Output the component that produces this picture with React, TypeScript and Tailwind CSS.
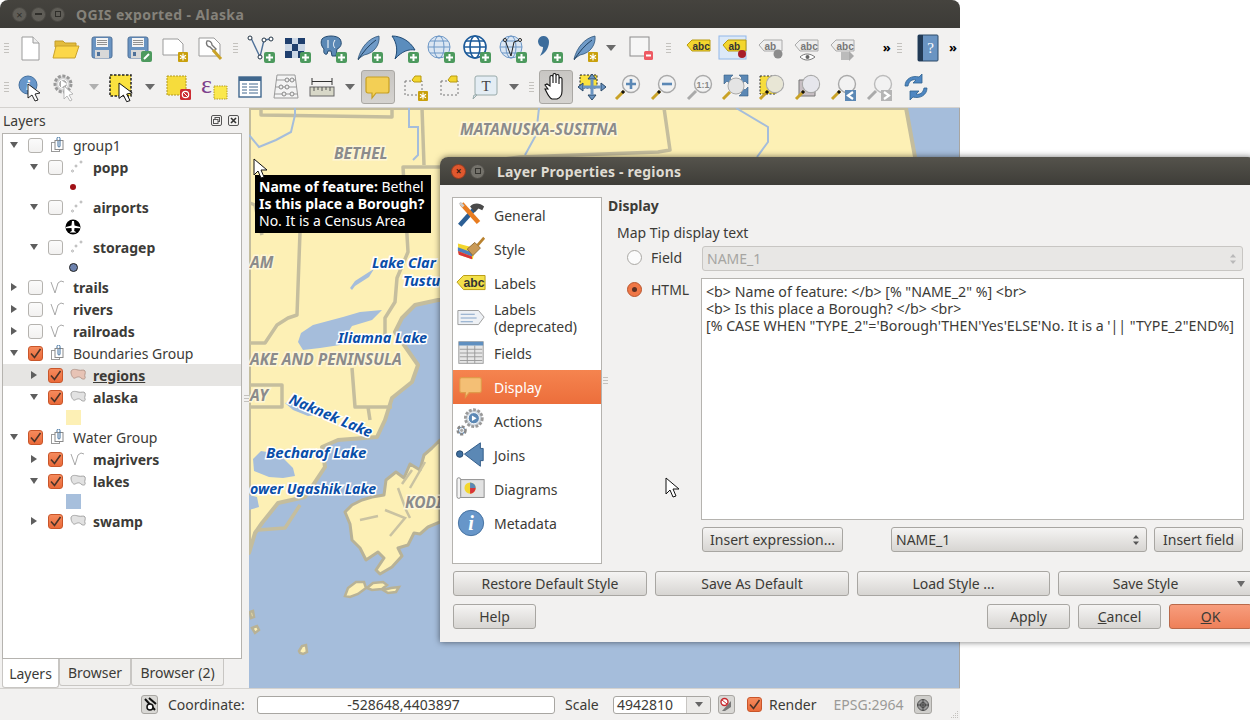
import React from "react";

const S: React.FC<{ size?: number; children: React.ReactNode }> = ({ size = 32, children }) => (
  <svg width={size} height={size} viewBox="0 0 32 32" className="block shrink-0">
    {children}
  </svg>
);

const PlusBadge = () => (
  <g>
    <rect x="20" y="20" width="11" height="11" rx="2" fill="#4d9a5e" />
    <path d="M25.5 22v7M22 25.5h7" stroke="#fff" strokeWidth="2" />
  </g>
);

const StarBadge = () => (
  <g>
    <rect x="20" y="20" width="10" height="10" rx="1" fill="#c9a00c" />
    <path d="M25 21.5v7M22 23.2l6 3.6M28 23.2l-6 3.6" stroke="#fff" strokeWidth="1.2" />
  </g>
);

const Page = ({ x = 8, w = 17 }: { x?: number; w?: number }) => (
  <g>
    <path d={`M${x} 5h${w - 6}l6 6v${w === 17 ? 17 : 11}H${x}z`} fill="#fff" stroke="#9b9b9b" />
    <path d={`M${x + w - 6} 5v6h6`} fill="#eee" stroke="#9b9b9b" />
  </g>
);

const Floppy = () => (
  <g>
    <rect x="6" y="5" width="20" height="21" rx="2" fill="#6a94c2" stroke="#4f7199" />
    <rect x="10" y="6" width="12" height="9" fill="#f4f4f4" />
    <path d="M11 8.5h10M11 10.5h10M11 12.5h10" stroke="#777" strokeWidth=".8" />
    <rect x="9" y="18" width="14" height="8" fill="#d8d8d8" />
    <rect x="11" y="20" width="3" height="4" fill="#4f7199" />
  </g>
);

const Globe = ({ dark }: { dark?: boolean }) => (
  <g fill="none" stroke={dark ? "#1d5b9a" : "#6d97c6"} strokeWidth={dark ? 1.6 : 1}>
    <circle cx="15" cy="15" r="11" fill={dark ? "#fff" : "#dbe6f2"} />
    <ellipse cx="15" cy="15" rx="5" ry="11" />
    <path d="M4 15h22M6 9h18M6 21h18" />
  </g>
);

const Feather = ({ fill = "#6f9ac7" }: { fill?: string }) => (
  <g>
    <path d="M6 27C9 15 17 6 27 4c1 8-4 17-15 19z" fill={fill} stroke="#2f5478" strokeWidth=".8" />
    <path d="M6 28C11 20 17 13 24 8" stroke="#20405f" fill="none" />
  </g>
);

const Tag = ({ text = "abc", fill = "#f3d62e", stroke = "#b89a10", color = "#333" }) => (
  <g>
    <path d="M5 13l5-5h18v11H10z" fill={fill} stroke={stroke} />
    <text x="10.5" y="17.5" fontSize="10" fontWeight="700" fill={color} fontFamily="'Liberation Sans',sans-serif">
      {text}
    </text>
  </g>
);

const Magnifier = ({ children }: { children?: React.ReactNode }) => (
  <g>
    <path d="M12 20L4 28" stroke="#c9a227" strokeWidth="3" />
    <path d="M12 20l-2 2" stroke="#111" strokeWidth="3" />
    <circle cx="19" cy="13" r="8.5" fill="#f2f2f2" stroke="#a9a9a9" strokeWidth="1.4" />
    {children}
  </g>
);

const Bubble = ({ fill = "#f3cf55", stroke = "#c7a022" }) => (
  <path d="M6 6h19a2 2 0 0 1 2 2v12a2 2 0 0 1-2 2H14l-4 5v-5H6a2 2 0 0 1-2-2V8a2 2 0 0 1 2-2z" fill={fill} stroke={stroke} strokeWidth="1.2" />
);

const Arrow = ({ x = 11, y = 13, s = 1 }: { x?: number; y?: number; s?: number }) => (
  <path
    transform={`translate(${x} ${y}) scale(${s})`}
    d="M0 0l0 14 4-3 3 6 3-1-3-6 5-1z"
    fill="#fff"
    stroke="#111"
    strokeWidth=".9"
  />
);

const InfoDisc = ({ r = 12 }: { r?: number }) => (
  <g>
    <circle cx="14" cy="14" r={r} fill="#6796c9" stroke="#44709f" />
    <text x="14" y={14 + r * 0.55} textAnchor="middle" fontSize={r * 1.6} fontWeight="700" fontStyle="italic" fill="#fff" fontFamily="'Liberation Serif',serif">
      i
    </text>
  </g>
);

const Gear = ({ cx = 14, cy = 14, r = 9, fill = "#d8d8d8", stroke = "#999" }) => (
  <g>
    <circle cx={cx} cy={cy} r={r} fill={fill} stroke={stroke} strokeWidth="3" strokeDasharray="3 1.6" />
    <circle cx={cx} cy={cy} r={r * 0.55} fill="#aaa" stroke="#fff" />
  </g>
);

const NewDoc = () => <S><Page /></S>;
const Open = () => (
  <S>
    <path d="M5 9h8l2 2h11v4H5z" fill="#e3bc3c" stroke="#c49c28" />
    <path d="M6 14h23l-4 12H3z" fill="#fcd749" stroke="#c9a22c" />
  </S>
);
const Save = () => <S><Floppy /></S>;
const SaveAs = () => (
  <S>
    <Floppy />
    <rect x="19" y="19" width="11" height="11" rx="2" fill="#4d9a5e" />
    <path d="M22 27l5-5" stroke="#fff" strokeWidth="2" />
  </S>
);
const NewComposer = () => (
  <S>
    <path d="M5 7h15l5 5v11H5z" fill="#fff" stroke="#9b9b9b" />
    <StarBadge />
  </S>
);
const ComposerMgr = () => (
  <S>
    <path d="M5 6h15l6 6v12H5z" fill="#fff" stroke="#9b9b9b" />
    <path d="M13 9a4 4 0 0 0 3 6l4 4 2-2-4-4a4 4 0 0 0-5-4z" fill="none" stroke="#777" strokeWidth="1.4" />
    <path d="M19 18l8 9" stroke="#c9a227" strokeWidth="3" />
  </S>
);
const AddVector = () => (
  <S>
    <path d="M7 6l9 19 4-17 7-1" fill="none" stroke="#4f7199" strokeWidth="1.4" />
    <circle cx="6" cy="6" r="2" fill="#fff" stroke="#234" />
    <circle cx="20" cy="8" r="2" fill="#fff" stroke="#234" />
    <circle cx="27" cy="7" r="2" fill="#fff" stroke="#234" />
    <circle cx="16" cy="25" r="2" fill="#fff" stroke="#234" />
    <PlusBadge />
  </S>
);
const AddRaster = () => (
  <S>
    <rect x="5" y="6" width="20" height="20" fill="#cbd7e6" />
    <path d="M5 6h7v6H5zM18 6h7v6h-7zM12 12h6v7h-6zM5 19h7v7H5zM18 19h6v7h-6z" fill="#1f3f6e" />
    <PlusBadge />
  </S>
);
const AddPg = () => (
  <S>
    <path d="M6 7c3-4 15-4 18 0 3 5 0 9-3 10l-1 7h-4l-1-5h-3l-1 3c-2 1-4-1-3-5-2-2-4-6-2-10z" fill="#5b88b5" stroke="#244a70" />
    <path d="M12 8v8M19 8c-2 3-2 6 0 8" stroke="#fff" fill="none" />
    <PlusBadge />
  </S>
);
const AddFeather = () => <S><Feather /><PlusBadge /></S>;
const AddWcs = () => (
  <S>
    <path d="M4 4c9 0 18 5 23 14-6-1-13 1-20 9 3-8 2-16-3-23z" fill="#5b8dbd" stroke="#1f4a75" />
    <PlusBadge />
  </S>
);
const AddWms = () => <S><Globe /><PlusBadge /></S>;
const AddWfs = () => <S><Globe dark /><PlusBadge /></S>;
const AddV = () => (
  <S>
    <Globe />
    <path d="M9 8l6 16 3-14 6-2" fill="none" stroke="#222" />
    <circle cx="9" cy="8" r="1.5" fill="#fff" stroke="#222" />
    <circle cx="24" cy="8" r="1.5" fill="#fff" stroke="#222" />
    <PlusBadge />
  </S>
);
const AddComma = () => (
  <S>
    <path d="M6 9a5.5 5.5 0 1 1 11 1c0 7-5 12-9 14 2-4 3-6 3-9-3 0-5-3-5-6z" fill="#3d6d9c" />
    <PlusBadge />
  </S>
);
const NewFeather = () => <S><Feather /><StarBadge /></S>;
const RemoveLayer = () => (
  <S>
    <rect x="6" y="5" width="19" height="19" fill="#f6f6f6" stroke="#8c8c8c" />
    <rect x="20" y="19" width="9" height="9" rx="1.5" fill="#ee5a63" />
    <path d="M22 23.5h5" stroke="#fff" strokeWidth="2" />
  </S>
);
const LabelAbc = () => <S size={32}><Tag /></S>;
const LabelPin = () => (
  <S>
    <rect x="1" y="4" width="27" height="23" fill="#dce9f8" stroke="#92b8e8" />
    <Tag text="ab" />
    <circle cx="24" cy="22" r="4" fill="#a81e2a" />
  </S>
);
const LabelGrayPin = () => (
  <S>
    <Tag text="ab" fill="#eee" stroke="#aaa" color="#777" />
    <circle cx="24" cy="22" r="4.5" fill="#8c8c8c" />
  </S>
);
const LabelEye = () => (
  <S>
    <Tag fill="#eee" stroke="#aaa" color="#777" />
    <path d="M10 25c4-4 10-4 15 0-5 4-11 4-15 0z" fill="#fff" stroke="#777" />
    <circle cx="17.5" cy="25" r="2" fill="#666" />
  </S>
);
const LabelMove = () => (
  <S>
    <Tag fill="#eee" stroke="#aaa" color="#777" />
    <rect x="15" y="20" width="8" height="8" fill="#bbb" />
    <path d="M23 19l5 5-5 5z" fill="#aaa" />
  </S>
);
const Help = () => (
  <S>
    <rect x="6" y="3" width="20" height="26" rx="1" fill="#6a94c2" stroke="#2c4a69" />
    <rect x="6" y="3" width="5" height="26" fill="#223a55" />
    <text x="18.5" y="21" textAnchor="middle" fontSize="15" fill="#fff" fontFamily="'Liberation Serif',serif">?</text>
  </S>
);
const Identify = () => (
  <S>
    <InfoDisc r={9} />
    <Arrow x={14} y={13} />
  </S>
);
const RunAction = () => (
  <S>
    <Gear cx={13} cy={13} r={8} />
    <path d="M11 9l6 4-6 4z" fill="#fff" />
    <path d="M14 15l0 13 3-3 3 5 2-1-3-5 4-1z" fill="#fff" stroke="#aaa" strokeWidth=".8" />
  </S>
);
const SelectArrow = () => (
  <S>
    <rect x="4" y="4" width="21" height="21" fill="#fbe23f" stroke="#222" strokeWidth="1.5" strokeDasharray="2.5 1.5" />
    <Arrow x={13} y={12} s={1.1} />
  </S>
);
const Deselect = () => (
  <S>
    <rect x="5" y="5" width="19" height="19" fill="#f6dc3c" stroke="#b19a20" strokeDasharray="2 1" />
    <rect x="18" y="18" width="11" height="11" rx="1.5" fill="#cc2c33" />
    <circle cx="23.5" cy="23.5" r="3.2" fill="none" stroke="#fff" strokeWidth="1.2" />
    <path d="M21 21l5 5" stroke="#fff" />
  </S>
);
const Epsilon = () => (
  <S>
    <text x="3" y="22" fontSize="26" fill="#7d3f8c" fontFamily="'Liberation Serif',serif">ε</text>
    <rect x="16" y="15" width="13" height="13" fill="#fbe84d" stroke="#b59d20" strokeDasharray="1.5 1" />
  </S>
);
const AttrTable = () => (
  <S>
    <rect x="5" y="6" width="22" height="20" fill="#fff" stroke="#40678d" strokeWidth="1.4" />
    <rect x="5" y="6" width="22" height="4" fill="#40678d" />
    <path d="M8 13h5M15 13h9M8 16h5M15 16h9M8 19h5M15 19h9M8 22h5M15 22h9" stroke="#40678d" />
  </S>
);
const Abacus = () => (
  <S>
    <path d="M4 27L7 4h18l3 23z" fill="#f4f4f4" stroke="#999" />
    <path d="M6 9h20M6 16h20M5 23h22" stroke="#999" />
    <g fill="#eee" stroke="#888">
      <circle cx="17" cy="9" r="2" /><circle cx="22" cy="9" r="2" /><circle cx="11" cy="16" r="2" /><circle cx="17" cy="16" r="2" /><circle cx="14" cy="23" r="2" /><circle cx="22" cy="23" r="2" />
    </g>
  </S>
);
const Measure = () => (
  <S>
    <path d="M6 7v7M26 7v7M6 10.5h20" stroke="#333" />
    <rect x="4" y="16" width="24" height="9" fill="#d8d8c8" stroke="#666" />
    <path d="M8 16v4M12 16v3M16 16v4M20 16v3M24 16v4" stroke="#555" />
  </S>
);
const TipActive = () => <S><Bubble /></S>;
const PinTip = ({ badge }: { badge?: boolean }) => (
  <S>
    <rect x="7" y="10" width="17" height="14" fill="none" stroke="#777" strokeDasharray="2 2" />
    <path d="M14 9l3-4h6v6h-7z" fill="#f3d62e" stroke="#b89a10" />
    {badge && <StarBadge />}
  </S>
);
const TextTip = () => (
  <S>
    <rect x="5" y="5" width="22" height="19" rx="2" fill="#e4edf4" stroke="#9aa" />
    <path d="M7 24l-4 4 1-4z" fill="#e4edf4" stroke="#9aa" />
    <text x="16" y="20" textAnchor="middle" fontSize="15" fill="#444" fontFamily="'Liberation Serif',serif">T</text>
  </S>
);
const Hand = () => (
  <S>
    <path d="M8 18l-3-4 2-1 3 2V6c0-2 3-2 3 0v6-8c0-2 3-2 3 0v8-7c0-2 3-2 3 0v8-5c0-2 3-2 3 0v12c0 4-2 7-5 8h-5c-3-1-4-4-7-10z" fill="#fff" stroke="#111" strokeWidth="1.1" />
  </S>
);
const PanSelect = () => (
  <S>
    <rect x="4" y="4" width="17" height="13" fill="#fbe23f" stroke="#222" strokeDasharray="2 1.5" />
    <path d="M16 3l4 5h-8zM16 29l4-5h-8zM2 16l5-4v8zM30 16l-5-4v8z" fill="#6a94c2" stroke="#2c4a69" />
    <path d="M16 8v16M7 16h18" stroke="#6a94c2" strokeWidth="3" />
  </S>
);
const ZoomIn = () => (
  <S><Magnifier><path d="M19 8v10M14 13h10" stroke="#5b88b5" strokeWidth="2.6" /></Magnifier></S>
);
const ZoomOut = () => (
  <S><Magnifier><path d="M14 13h10" stroke="#5b88b5" strokeWidth="2.6" /></Magnifier></S>
);
const ZoomOne = () => (
  <S>
    <path d="M12 20L4 28" stroke="#aaa" strokeWidth="3" />
    <circle cx="19" cy="13" r="8.5" fill="#f2f2f2" stroke="#aaa" strokeWidth="1.4" />
    <text x="19" y="17" textAnchor="middle" fontSize="9" fontWeight="700" fill="#888" fontFamily="'Liberation Sans',sans-serif">1:1</text>
  </S>
);
const ZoomFull = () => (
  <S>
    <path d="M4 4h9l-3 3 3 3-3 3-3-3-3 3zM28 4h-9l3 3-3 3 3 3 3-3 3 3zM28 25h-9l3-3-3-3 3-3 3 3 3-3z" fill="#5b88b5" stroke="#345b82" strokeWidth=".6" />
    <circle cx="16" cy="15" r="8" fill="#e4e4e4" stroke="#aaa" />
    <path d="M10 21l-7 7" stroke="#c9a227" strokeWidth="3" />
  </S>
);
const ZoomLayer = () => (
  <S>
    <rect x="4" y="5" width="16" height="18" fill="#f6dc3c" stroke="#333" strokeDasharray="2 1.5" />
    <Magnifier><circle cx="19" cy="13" r="8" fill="#e8e6d5" /></Magnifier>
  </S>
);
const ZoomSel = () => (
  <S>
    <path d="M7 9h16v16H7z" fill="#c8bfc4" stroke="#777" />
    <Magnifier><circle cx="19" cy="13" r="8" fill="#e6e6ec" /></Magnifier>
  </S>
);
const ZoomLast = () => (
  <S>
    <Magnifier />
    <rect x="17" y="19" width="11" height="11" fill="#5b88b5" />
    <path d="M25 21l-5 3.5 5 3.5" fill="none" stroke="#fff" strokeWidth="2.2" />
  </S>
);
const ZoomNext = () => (
  <S>
    <path d="M12 20L4 28" stroke="#aaa" strokeWidth="3" />
    <circle cx="19" cy="13" r="8.5" fill="#f2f2f2" stroke="#bbb" strokeWidth="1.4" />
    <rect x="17" y="19" width="11" height="11" fill="#b5b5b5" />
    <path d="M20 21l5 3.5-5 3.5" fill="none" stroke="#fff" strokeWidth="2.2" />
  </S>
);
const Refresh = () => (
  <S>
    <path d="M5 15C5 8 12 4 19 6l3-3v9h-9l3-3c-4-1-7 1-8 6z" fill="#4f87c2" stroke="#2e628f" strokeWidth=".8" />
    <path d="M27 17c0 7-7 11-14 9l-3 3v-9h9l-3 3c4 1 7-1 8-6z" fill="#4f87c2" stroke="#2e628f" strokeWidth=".8" />
  </S>
);

const Grip = ({ w = 14 }: { w?: number }) => (
  <div className="flex flex-col items-center justify-center gap-[2px] shrink-0" style={{ width: w }}>
    <div className="w-[5px] h-px bg-[#c4c2be]" />
    <div className="w-[5px] h-px bg-[#c4c2be]" />
    <div className="w-[5px] h-px bg-[#c4c2be]" />
    <div className="w-[5px] h-px bg-[#c4c2be]" />
  </div>
);

const Tool: React.FC<{ children: React.ReactNode; active?: boolean }> = ({ children, active }) => (
  <div className="w-[36px] h-[36px] flex items-center justify-center shrink-0">
    {active ? (
      <div className="w-[34px] h-[34px] rounded-[3px] border border-[#aaa8a4] bg-linear-to-b from-[#c8c6c3] to-[#d5d3d0] flex items-center justify-center">
        {children}
      </div>
    ) : (
      children
    )}
  </div>
);

const Drop = ({ muted, w = 20 }: { muted?: boolean; w?: number }) => (
  <div className="flex items-center justify-center shrink-0" style={{ width: w }}>
    <div className={`w-0 h-0 border-x-[5px] border-x-transparent border-t-[6px] ${muted ? "border-t-[#b0b0b0]" : "border-t-[#6a6a6a]"}`} />
  </div>
);

const Chevrons = () => <div className="w-[14px] text-center text-[13px] font-bold text-black leading-none shrink-0">»</div>;

const row1a = [NewDoc, Open, Save, SaveAs, NewComposer, ComposerMgr];
const row1b = [AddVector, AddRaster, AddPg, AddFeather, AddWcs, AddWms, AddWfs, AddV, AddComma, NewFeather];
const row1c = [LabelAbc, LabelPin, LabelGrayPin, LabelEye, LabelMove];
const row2a = [Deselect, Epsilon, AttrTable, Abacus, Measure];
const row2b = [PanSelect, ZoomIn, ZoomOut, ZoomOne, ZoomFull, ZoomLayer, ZoomSel, ZoomLast, ZoomNext, Refresh];

const Toolbars = () => (
  <div className="h-[80px] bg-[#f2f1f0] flex flex-col border-b border-[#d4d2cf]">
    <div className="h-[40px] flex items-center">
      <Grip w={12} />
      {row1a.map((I, i) => <Tool key={i}><I /></Tool>)}
      <Grip />
      {row1b.map((I, i) => <Tool key={i}><I /></Tool>)}
      <Drop muted={false} w={18} />
      <div className="w-[2px]" />
      <Tool><RemoveLayer /></Tool>
      <Grip w={22} />
      {row1c.map((I, i) => <Tool key={i}><I /></Tool>)}
      <div className="w-[24px]" />
      <Chevrons />
      <Grip w={12} />
      <div className="w-[5px]" />
      <Tool><Help /></Tool>
      <Chevrons />
    </div>
    <div className="h-[40px] flex items-center">
      <Grip w={12} />
      <Tool><Identify /></Tool>
      <Tool><RunAction /></Tool>
      <Drop muted />
      <Tool><SelectArrow /></Tool>
      <Drop />
      {row2a.map((I, i) => <Tool key={i}><I /></Tool>)}
      <Drop />
      <Tool active><TipActive /></Tool>
      <Tool><PinTip badge /></Tool>
      <Tool><PinTip /></Tool>
      <Tool><TextTip /></Tool>
      <Drop />
      <Grip />
      <Tool active><Hand /></Tool>
      {row2b.map((I, i) => <Tool key={i}><I /></Tool>)}
    </div>
  </div>
);

const Check = ({ on }: { on?: boolean }) =>
  on ? (
    <div className="w-[15px] h-[15px] rounded-[3px] border border-[#c9562a] bg-linear-to-b from-[#f58a5c] to-[#ea6a39] flex items-center justify-center shrink-0">
      <svg width="13" height="13" viewBox="0 0 13 13"><path d="M2 6.5l3.5 4L11.5 2" fill="none" stroke="#4a3328" strokeWidth="1.6" /></svg>
    </div>
  ) : (
    <div className="w-[15px] h-[15px] rounded-[3px] border border-[#b5b3af] bg-linear-to-b from-[#fbfbfb] to-[#f2f1f0] shrink-0" />
  );

const Twist = ({ open }: { open?: boolean }) => (
  <svg width="8" height="8" viewBox="0 0 8 8" className="shrink-0">
    {open ? <path d="M0 1h8L4 7z" fill="#5e5e5e" /> : <path d="M1 0l6 4-6 4z" fill="#5e5e5e" />}
  </svg>
);

const GroupIcon = () => (
  <svg width="16" height="16" viewBox="0 0 16 16" className="shrink-0">
    <rect x="1.5" y="5.5" width="8" height="9" fill="#fff" stroke="#9a9a9a" />
    <rect x="5" y="3.5" width="8" height="9" fill="#fff" stroke="#8a8a8a" />
    <path d="M7 3V1.5a1.5 1.5 0 0 1 3 0V9a1 1 0 0 1-2 0V4" fill="none" stroke="#3f6f9e" />
  </svg>
);
const PointIcon = () => (
  <svg width="16" height="16" viewBox="0 0 16 16" className="shrink-0">
    <g fill="#fff" stroke="#a0a0a0" strokeWidth=".8"><circle cx="2.5" cy="12" r="1" /><circle cx="6" cy="7" r="1" /><circle cx="11" cy="3" r="1" /></g>
  </svg>
);
const LineIcon = () => (
  <svg width="16" height="16" viewBox="0 0 16 16" className="shrink-0">
    <path d="M1 3l4 11 3-10 3-2 3 1" fill="none" stroke="#a8a8a8" />
  </svg>
);
const PolyIcon = ({ fill = "#e2e2e2", stroke = "#a4a4a4" }) => (
  <svg width="16" height="16" viewBox="0 0 16 16" className="shrink-0">
    <path d="M1 5c0-3 4-3 7-2s6-1 7 1-1 4 0 6-2 3-4 1-4-1-6 0-4-3-4-6z" fill={fill} stroke={stroke} />
  </svg>
);

type Node = {
  level: 0 | 1;
  name: string;
  icon: React.ReactNode;
  open?: boolean;
  on?: boolean;
  bold?: boolean;
  sel?: boolean;
  legend?: React.ReactNode;
};

const Swatch = ({ c }: { c: string }) => <div className="w-[15px] h-[15px]" style={{ background: c }} />;

const nodes: Node[] = [
  { level: 0, name: "group1", icon: <GroupIcon />, open: true },
  { level: 1, name: "popp", icon: <PointIcon />, open: true, bold: true, legend: <div className="w-[6px] h-[6px] rounded-full bg-[#a01016]" /> },
  {
    level: 1, name: "airports", icon: <PointIcon />, open: true, bold: true,
    legend: (
      <svg width="16" height="16" viewBox="0 0 16 16">
        <circle cx="8" cy="8" r="7.5" fill="#000" />
        <path d="M7 2h2l.5 4.5L15 8v1.2L9.5 9l-.3 3 1.8 1v.6H5v-.6l1.8-1-.3-3L1 9.2V8l5.5-1.5z" fill="#fff" />
      </svg>
    ),
  },
  { level: 1, name: "storagep", icon: <PointIcon />, open: true, bold: true, legend: <div className="w-[9px] h-[9px] rounded-full bg-[#6d82ae] border border-[#222]" /> },
  { level: 0, name: "trails", icon: <LineIcon />, bold: true },
  { level: 0, name: "rivers", icon: <LineIcon />, bold: true },
  { level: 0, name: "railroads", icon: <LineIcon />, bold: true },
  { level: 0, name: "Boundaries Group", icon: <GroupIcon />, open: true, on: true },
  { level: 1, name: "regions", icon: <PolyIcon fill="#e7c3b5" stroke="#b79a8e" />, on: true, bold: true, sel: true },
  { level: 1, name: "alaska", icon: <PolyIcon />, open: true, on: true, bold: true, legend: <Swatch c="#fdf0b5" /> },
  { level: 0, name: "Water Group", icon: <GroupIcon />, open: true, on: true },
  { level: 1, name: "majrivers", icon: <LineIcon />, on: true, bold: true },
  { level: 1, name: "lakes", icon: <PolyIcon />, open: true, on: true, bold: true, legend: <Swatch c="#a7bfdc" /> },
  { level: 1, name: "swamp", icon: <PolyIcon />, on: true, bold: true },
];

const Tree = () => (
  <div className="flex-1 ml-[2px] w-[240px] bg-white border border-[#b5b3af]">
    {nodes.map((n) => (
      <React.Fragment key={n.name}>
        <div className={`h-[22px] flex items-center ${n.level === 1 ? "pl-[27px]" : "pl-[7px]"} ${n.sel ? "bg-[#e6e5e3]" : ""}`}>
          <Twist open={n.open} />
          <div className="w-[10px]" />
          <Check on={n.on} />
          <div className="w-[7px]" />
          {n.icon}
          <span className={`ml-[7px] ${n.bold ? "font-bold" : ""} ${n.sel ? "underline" : ""}`}>{n.name}</span>
        </div>
        {n.legend && <div className="h-[18px] w-[16px] ml-[62px] flex items-center justify-center">{n.legend}</div>}
      </React.Fragment>
    ))}
  </div>
);

const Sidebar = () => (
  <div className="w-[243px] flex flex-col shrink-0">
    <div className="h-[25px] flex items-center px-[3px]">
      <span className="text-[14px]">Layers</span>
      <svg width="11" height="11" viewBox="0 0 11 11" className="ml-auto">
        <rect x=".5" y=".5" width="10" height="10" rx="1.5" fill="none" stroke="#555" />
        <rect x="4" y="2.5" width="4.5" height="4" fill="none" stroke="#555" />
        <rect x="2.5" y="4.5" width="4.5" height="4" fill="#f2f1f0" stroke="#555" />
      </svg>
      <svg width="11" height="11" viewBox="0 0 11 11" className="ml-[6px] mr-[1px]">
        <rect x=".5" y=".5" width="10" height="10" rx="1.5" fill="none" stroke="#555" />
        <path d="M3 3l5 5M8 3l-5 5" stroke="#333" strokeWidth="1.6" />
      </svg>
    </div>
    <Tree />
    <div className="h-[29px] flex items-start pl-[2px]">
      <div className="w-[57px] h-[29px] bg-white border border-t-0 border-[#c8c6c3] rounded-b-[3px] flex items-center justify-center">Layers</div>
      <div className="w-[72px] h-[27px] bg-[#f0efed] border border-t-0 border-[#c8c6c3] rounded-b-[3px] flex items-center justify-center">Browser</div>
      <div className="w-[93px] h-[27px] bg-[#f0efed] border border-t-0 border-[#c8c6c3] rounded-b-[3px] flex items-center justify-center">Browser (2)</div>
    </div>
  </div>
);

const labelGray = "fill-[#8b8b8b] stroke-[#fdf6d8] [paint-order:stroke] text-[15.5px] font-bold italic";
const labelBlue = "fill-[#0a4ea8] stroke-white [paint-order:stroke] text-[14.5px] font-bold italic";

const MapView = () => (
  <div className="flex-1 bg-[#a5bddb] border-r border-[#a8a6a2] relative">
    <svg width="710" height="580" viewBox="249 108 710 580" className="block">
      <rect x="249" y="108" width="710" height="580" fill="#a5bddb" />
      {/* mainland */}
      <path
        d="M249 108H906L915 157 916 300H438L415 305 402 318 395 332 418 365 412 382 392 398 385 420 377 437 338 440 322 447 325 467 305 497 278 503 262 523 255 533 249 553z"
        fill="#fdf0b5" stroke="#c4bd9d" strokeWidth="4" strokeLinejoin="round"
      />
      {/* kodiak and islands */}
      <path
        d="M345 512L352 505 362 500 372 497 384 495 386 480 396 472 404 478 410 464 420 470 424 455 432 448 440 440V522L428 527 420 534 414 533 408 545 398 548 402 556 392 567 380 574 376 570 384 558 378 552 366 560 360 548 352 540 350 524z"
        fill="#fdf0b5" stroke="#b8b296" strokeWidth="3" strokeLinejoin="round"
      />
      <path d="M345 596l3-8 8-6 8 0 2 6-8 6-8 3zM367 588l6-5 10-1 4 3-5 4-10 1zM383 590l8-2 8-1-3 5-8 1z" fill="#fdf0b5" stroke="#b8b296" strokeWidth="2.5" />
      <path d="M299 651l3-5 4-1 1 7-4 2-3-1zM250 612l3-1 1 6-3 1zM252 628l5-2 2 4-4 3z" fill="#fdf0b5" stroke="#b8b296" strokeWidth="2.5" />
      <path d="M398 488l8 22 4 8M412 470l-10 14M425 462l-15 26M385 510l20 8-15 18M360 520l18-4" fill="none" stroke="#c9c2a2" strokeWidth="2.5" />
      {/* boundaries */}
      <g fill="none" stroke="#c5be9e" strokeWidth="3.5" strokeLinejoin="round">
        <path d="M261 108V115L392 117V108" />
        <path d="M422 108L424 165" />
        <path d="M664 108L670 150 658 152 520 157 440 167H403L408 252 397 278 395 302 385 318 385 335" />
        <path d="M300 232L297 315 288 318 277 325 265 343H249" />
        <path d="M250 203L255 205 262 235" />
        <path d="M352 368L355 407H392M368 407L370 420" />
        <path d="M249 385H282V407H249" />
        <path d="M258 530l27-2 15-23" />
      </g>
      {/* lakes and rivers */}
      <g fill="#a5bddb" stroke="none">
        <path d="M301 333l12-8 30-8 17-5 22-2-10 10-20 6-12 19-20 3-17 2-5-8z" />
        <path d="M350 288l5-7 14-9 5-3-5 8-14 9-3 4z" />
        <path d="M253 459l8-8 18 3 14 14 2 8-12 2-14-1-15-6z" />
        <path d="M285 403l12-2 20 8 5 5-14 2-15-6z" />
        <path d="M249 495l8 2 2 10-10 3z" />
      </g>
      <g fill="none" stroke="#a5bddb" strokeWidth="2">
        <path d="M295 108v7l-4 17-15 8-17 7-10-12" />
        <path d="M409 108v19h9v28l-5 5" />
        <path d="M539 108l-3 27-11 20" />
        <path d="M736 108l32 19v15l-11 15" />
      </g>
      {/* labels */}
      <text x="460" y="135" strokeWidth="3" className={labelGray}>MATANUSKA-SUSITNA</text>
      <text x="334" y="159" strokeWidth="3" className={labelGray}>BETHEL</text>
      <text x="250" y="268" strokeWidth="3" className={labelGray}>AM</text>
      <text x="250" y="365" strokeWidth="3" className={labelGray}>AKE AND PENINSULA</text>
      <text x="250" y="401" strokeWidth="3" className={labelGray}>AY</text>
      <text x="405" y="508" strokeWidth="3" className={labelGray}>KODI</text>
      <text x="372" y="268" strokeWidth="3" className={labelBlue}>Lake Clar</text>
      <text x="403" y="286" strokeWidth="3" className={labelBlue}>Tustu</text>
      <text x="338" y="343" strokeWidth="3" className={labelBlue}>Iliamna Lake</text>
      <text x="288" y="403" strokeWidth="3" transform="rotate(23 288 403)" className={labelBlue}>Naknek Lake</text>
      <text x="266" y="458" strokeWidth="3" className="fill-[#0a4ea8] stroke-white [paint-order:stroke] text-[15px] font-bold italic">Becharof Lake</text>
      <text x="250" y="494" strokeWidth="3" className="fill-[#0a4ea8] stroke-white [paint-order:stroke] text-[14.2px] font-bold italic">ower Ugashik Lake</text>
    </svg>
    <div className="absolute left-[6px] top-[67px] w-[176px] h-[58px] bg-black text-white leading-[17px] px-[4px] pt-[3px] whitespace-nowrap">
      <div><b>Name of feature:</b> Bethel</div>
      <div className="font-bold">Is this place a Borough?</div>
      <div>No. It is a Census Area</div>
    </div>
  </div>
);

const Spin = ({ muted }: { muted?: boolean }) => (
  <svg width="8" height="14" viewBox="0 0 8 14" className="shrink-0">
    <path d="M1 5.5L4 2l3 3.5zM1 8.5L4 12l3-3.5z" fill={muted ? "#b9b9b9" : "#555"} />
  </svg>
);

const Btn: React.FC<{ w: number; children: React.ReactNode; primary?: boolean; className?: string }> = ({ w, children, primary, className = "" }) => (
  <div
    style={{ width: w }}
    className={`h-[25px] shrink-0 rounded-[3px] border flex items-center justify-center relative ${primary ? "border-[#b9694a] bg-linear-to-b from-[#f79d7d] to-[#ee8059]" : "border-[#a8a6a2] bg-linear-to-b from-[#f5f4f3] to-[#d7d5d2]"} ${className}`}
  >
    {children}
  </div>
);

const Radio = ({ on }: { on?: boolean }) =>
  on ? (
    <div className="w-[15px] h-[15px] rounded-full border border-[#b9562e] bg-[#f07746] flex items-center justify-center shrink-0">
      <div className="w-[5px] h-[5px] rounded-full bg-[#5c3022]" />
    </div>
  ) : (
    <div className="w-[15px] h-[15px] rounded-full border border-[#aaa8a4] bg-[#fbfbfb] shrink-0" />
  );

const IcoGeneral = () => (
  <S size={30}>
    <path d="M4 27L20 9" stroke="#2c5f95" strokeWidth="5" />
    <path d="M6 4l18 20" stroke="#e87c20" strokeWidth="5" />
    <path d="M4 3l4 4" stroke="#ccc" strokeWidth="3" />
    <path d="M15 7c3-4 10-5 15 0l-2 4-4-2-4 4z" fill="#4a4a4a" />
  </S>
);
const IcoStyle = () => (
  <S size={30}>
    <path d="M2 10l18 5-2 12L3 22z" fill="#f3d62e" />
    <path d="M2 14l16 6-1 4-15-6z" fill="#4f7fc0" />
    <path d="M2 18l15 6v3L3 22z" fill="#d8343a" />
    <path d="M12 16l8-7 6 6-8 8z" fill="#c99a57" stroke="#8f6b34" />
    <path d="M22 11l7-8 2 2-7 8z" fill="#b9822f" />
  </S>
);
const IcoLabels = () => (
  <S size={30}>
    <path d="M1 15l7-7h23v15H8z" fill="#f3e04a" stroke="#b89a10" />
    <text x="8" y="20.5" fontSize="13" fontWeight="700" fill="#333" fontFamily="'Liberation Sans',sans-serif">abc</text>
  </S>
);
const IcoDepr = () => (
  <S size={30}>
    <path d="M2 8h22l6 7-6 8H2z" fill="#eef1f5" stroke="#9a9a9a" />
    <path d="M5 12h15M5 16h17M5 20h13" stroke="#7d9ec4" />
  </S>
);
const IcoFields = () => (
  <S size={30}>
    <rect x="3" y="4" width="26" height="23" fill="#e6e6e6" stroke="#9a9a9a" />
    <rect x="3" y="4" width="26" height="4" fill="#5f8fc0" />
    <path d="M4 12h24M4 16h24M4 20h24M4 24h24M12 8v19M20 8v19" stroke="#9a9a9a" />
  </S>
);
const IcoDisplay = () => <S size={30}><Bubble fill="#f4bf75" stroke="#e09a4a" /></S>;
const IcoActions = () => (
  <S size={30}>
    <Gear cx={19} cy={13} r={9} fill="#cfd6dd" stroke="#9a9a9a" />
    <circle cx="19" cy="13" r="6" fill="#5b88b5" stroke="#fff" />
    <path d="M17 10l5 3-5 3z" fill="#fff" />
    <Gear cx={6} cy={26} r={4} fill="#7ea5cc" stroke="#888" />
  </S>
);
const IcoJoins = () => (
  <S size={30}>
    <circle cx="4" cy="15" r="3.5" fill="#3e6e9e" stroke="#23486d" />
    <path d="M9 15L26 3v6h3v13h-3v6z" fill="#5b88b5" stroke="#2f5a86" />
  </S>
);
const IcoDiagrams = () => (
  <S size={30}>
    <rect x="2" y="6" width="28" height="19" fill="#e2e2e2" stroke="#8a8a8a" />
    <rect x="1" y="4" width="4" height="22" rx="2" fill="#f4f4f4" stroke="#8a8a8a" />
    <circle cx="15" cy="15" r="6" fill="#f3d62e" />
    <path d="M15 15V9a6 6 0 0 1 6 6z" fill="#5b88b5" />
    <path d="M15 15h6a6 6 0 0 1-6 6z" fill="#d8343a" />
  </S>
);
const IcoMeta = () => (
  <S size={30}>
    <g transform="translate(2 2)"><InfoDisc r={13.5} /></g>
  </S>
);

const menu: { label: React.ReactNode; icon: React.ReactNode; sel?: boolean; tall?: boolean }[] = [
  { label: "General", icon: <IcoGeneral /> },
  { label: "Style", icon: <IcoStyle /> },
  { label: "Labels", icon: <IcoLabels /> },
  { label: <span className="leading-[17px] block">Labels<br />(deprecated)</span>, icon: <IcoDepr />, tall: true },
  { label: "Fields", icon: <IcoFields /> },
  { label: "Display", icon: <IcoDisplay />, sel: true },
  { label: "Actions", icon: <IcoActions /> },
  { label: "Joins", icon: <IcoJoins /> },
  { label: "Diagrams", icon: <IcoDiagrams /> },
  { label: "Metadata", icon: <IcoMeta /> },
];

const Dialog = () => (
  <div className="absolute left-[440px] top-[157px] w-[816px] h-[485px] rounded-t-lg shadow-[0_0_6px_rgba(0,0,0,0.55)] flex flex-col">
    <div className="h-[28px] rounded-t-lg bg-linear-to-b from-[#55534c] to-[#3e3d38] flex items-center pl-[11px] shrink-0">
      <div className="w-[15px] h-[15px] rounded-full bg-[#e0582e] border border-[#8f3b22] flex items-center justify-center text-[10px] font-bold text-[#3c1a10] leading-none">×</div>
      <div className="w-[15px] h-[15px] ml-[4px] rounded-full bg-[#74726b] border border-[#4d4b46] flex items-center justify-center">
        <div className="w-[6px] h-[6px] border border-[#35342f]" />
      </div>
      <span className="ml-[12px] font-bold text-[#dfdbd2] tracking-[0.2px]">Layer Properties - regions</span>
    </div>
    <div className="flex-1 bg-[#f2f1f0] flex flex-col pt-[12px] pl-[12px]">
      <div className="flex h-[367px]">
        <div className="w-[150px] h-[367px] bg-white border border-[#b5b3af] shrink-0">
          {menu.map((m, i) => (
            <div key={i} className={`${m.tall ? "h-[36px]" : "h-[34px]"} flex items-center ${m.sel ? "bg-linear-to-b from-[#f5844f] to-[#ec6e3b] text-white" : ""}`}>
              <div className="w-[41px] pl-[3px] shrink-0">{m.icon}</div>
              <div>{m.label}</div>
            </div>
          ))}
        </div>
        <div className="w-[6px] flex flex-col justify-center items-center gap-[2px] shrink-0">
          <div className="w-[5px] h-px bg-[#c4c2be]" />
          <div className="w-[5px] h-px bg-[#c4c2be]" />
          <div className="w-[5px] h-px bg-[#c4c2be]" />
        </div>
        <div className="flex-1 flex flex-col">
          <div className="h-[18px] leading-[18px] font-bold">Display</div>
          <div className="h-[20px] mt-[8px] leading-[20px] pl-[9px]">Map Tip display text</div>
          <div className="mt-[3px] h-[25px] flex items-center pl-[19px]">
            <div className="flex items-center pb-[2px] w-[75px] shrink-0">
              <Radio />
              <span className="ml-[9px]">Field</span>
            </div>
            <div className="w-[541px] h-[25px] rounded-[3px] border border-[#c8c6c3] bg-[#e8e7e5] flex items-center pl-[4px] pr-[5px] text-[#a6a5a2]">
              <span className="flex-1">NAME_1</span>
              <Spin muted />
            </div>
          </div>
          <div className="mt-[7px] flex pl-[19px]">
            <div className="flex items-center h-[22px] w-[74px] shrink-0">
              <Radio on />
              <span className="ml-[9px]">HTML</span>
            </div>
            <div className="w-[543px] h-[242px] bg-white border border-[#b5b3af] px-[4px] pt-[4px] text-[14.2px] leading-[17px] whitespace-nowrap">
              <div>{'<b> Name of feature: </b> [% "NAME_2" %] <br>'}</div>
              <div>{"<b> Is this place a Borough? </b> <br>"}</div>
              <div>{`[% CASE WHEN "TYPE_2"='Borough'THEN'Yes'ELSE'No. It is a '|| "TYPE_2"END%]`}</div>
            </div>
          </div>
          <div className="mt-[7px] h-[25px] flex pl-[94px]">
            <Btn w={141}>Insert expression...</Btn>
            <div className="ml-[48px] w-[256px] h-[25px] rounded-[3px] border border-[#a8a6a2] bg-linear-to-b from-[#f5f4f3] to-[#d7d5d2] flex items-center pl-[4px] pr-[6px]">
              <span className="flex-1">NAME_1</span>
              <Spin />
            </div>
            <Btn w={89} className="ml-[7px]">Insert field</Btn>
          </div>
        </div>
      </div>
      <div className="mt-[7px] flex gap-[8px] pl-px">
        <Btn w={194}>Restore Default Style</Btn>
        <Btn w={194}>Save As Default</Btn>
        <Btn w={193}>Load Style ...</Btn>
        <Btn w={195} className="pr-[20px]">
          Save Style
          <div className="absolute right-[7px] top-[9px] w-0 h-0 border-x-[4px] border-x-transparent border-t-[6px] border-t-[#6a6a6a]" />
        </Btn>
      </div>
      <div className="mt-[8px] flex pl-px">
        <Btn w={83}>Help</Btn>
        <Btn w={83} className="ml-[451px]">Apply</Btn>
        <Btn w={83} className="ml-[8px]"><span><u>C</u>ancel</span></Btn>
        <Btn w={83} primary className="ml-[8px]"><span><u>O</u>K</span></Btn>
      </div>
    </div>
  </div>
);

const StatusBar = () => (
  <div className="h-[32px] bg-[#f2f1f0] border-t border-[#d4d2cf] flex items-center shrink-0 relative">
    <div className="ml-[141px] w-[17px] h-[19px] rounded-[3px] border border-[#a8a6a2] bg-[#d9d8d5] flex items-center justify-center">
      <svg width="14" height="15" viewBox="0 0 14 15"><path d="M2 2l10 11M6 1l7 6" stroke="#111" strokeWidth="2" /><circle cx="7" cy="10" r="3" fill="#fff" stroke="#111" strokeWidth="1.5" /></svg>
    </div>
    <span className="ml-[10px] w-[89px]">Coordinate:</span>
    <div className="w-[298px] h-[18px] rounded-[3px] border border-[#a8a6a2] bg-white flex items-center justify-center leading-none pr-[5px]">-528648,4403897</div>
    <span className="ml-[10px] w-[48px]">Scale</span>
    <div className="w-[98px] h-[18px] rounded-[3px] border border-[#a8a6a2] bg-white flex items-center pl-[3px] leading-none">
      <span className="flex-1">4942810</span>
      <div className="w-[24px] h-[16px] border-l border-[#c8c6c3] bg-[#ecebe9] rounded-r-[3px] flex items-center justify-center">
        <div className="w-0 h-0 border-x-[4px] border-x-transparent border-t-[5px] border-t-[#666]" />
      </div>
    </div>
    <div className="ml-[7px] w-[17px] h-[19px] rounded-[3px] border border-[#a8a6a2] bg-[#d9d8d5] flex items-center justify-center">
      <svg width="15" height="16" viewBox="0 0 15 16"><path d="M3 14l9-10v6l-6 4z" fill="#777" /><circle cx="5.5" cy="5" r="3.5" fill="#fff" stroke="#c6282e" strokeWidth="1.4" /><path d="M3 3l5 4" stroke="#c6282e" /></svg>
    </div>
    <div className="ml-[12px]"><Check on /></div>
    <span className="ml-[7px]">Render</span>
    <span className="ml-[17px] text-[#9b9a97]">EPSG:2964</span>
    <div className="ml-[11px] w-[18px] h-[19px] rounded-[3px] border border-[#a8a6a2] bg-[#cfcecb] flex items-center justify-center">
      <svg width="14" height="14" viewBox="0 0 14 14"><circle cx="7" cy="7" r="5.5" fill="#9a9a9a" stroke="#555" /><path d="M7 1v12M1 7h12" stroke="#444" /><circle cx="7" cy="7" r="2.5" fill="none" stroke="#444" /></svg>
    </div>
    <svg width="10" height="10" viewBox="0 0 10 10" className="absolute right-[1px] bottom-[1px]">
      <g fill="#c4c2be"><rect x="8" y="2" width="1" height="1" /><rect x="6" y="4" width="1" height="1" /><rect x="8" y="4" width="1" height="1" /><rect x="4" y="6" width="1" height="1" /><rect x="6" y="6" width="1" height="1" /><rect x="8" y="6" width="1" height="1" /><rect x="2" y="8" width="1" height="1" /><rect x="4" y="8" width="1" height="1" /><rect x="6" y="8" width="1" height="1" /><rect x="8" y="8" width="1" height="1" /></g>
    </svg>
  </div>
);

const Cursor = ({ className }: { className: string }) => (
  <svg width="16" height="22" viewBox="0 0 16 22" className={`absolute ${className}`}>
    <path d="M1 1v16l4-4 3 7 3-1-3-7h6z" fill="#fff" stroke="#111" />
  </svg>
);

export default function App() {
  return (
    <div className="relative w-[1250px] h-[720px] overflow-hidden bg-white font-['Noto_Sans',sans-serif] text-[14px] text-[#3c3b37]">
      <div className="w-[960px] h-[720px] flex flex-col">
        <div className="h-[28px] shrink-0 rounded-t-lg bg-linear-to-b from-[#45433e] to-[#3c3b37] flex items-center pl-[12px]">
          {[0, 1, 2].map((i) => (
            <div key={i} className="w-[15px] h-[15px] mr-[4px] rounded-full bg-[#5f5d57] border border-[#4a4843] flex items-center justify-center">
              {i === 0 && <span className="text-[11px] leading-none text-[#2f2e2a]">×</span>}
              {i === 1 && <div className="w-[7px] h-[2px] bg-[#2f2e2a]" />}
              {i === 2 && <div className="w-[6px] h-[6px] border border-[#2f2e2a]" />}
            </div>
          ))}
          <span className="ml-[7px] font-bold text-[#85827a] tracking-[0.4px]">QGIS exported - Alaska</span>
        </div>
        <Toolbars />
        <div className="flex-1 flex min-h-0 bg-[#f2f1f0]">
          <Sidebar />
          <div className="w-[6px] flex flex-col justify-center items-center gap-[2px] shrink-0">
            <div className="w-[5px] h-px bg-[#c4c2be]" />
            <div className="w-[5px] h-px bg-[#c4c2be]" />
            <div className="w-[5px] h-px bg-[#c4c2be]" />
          </div>
          <MapView />
        </div>
        <StatusBar />
      </div>
      <Dialog />
      <Cursor className="left-[253px] top-[158px]" />
      <Cursor className="left-[665px] top-[477px]" />
    </div>
  );
}
